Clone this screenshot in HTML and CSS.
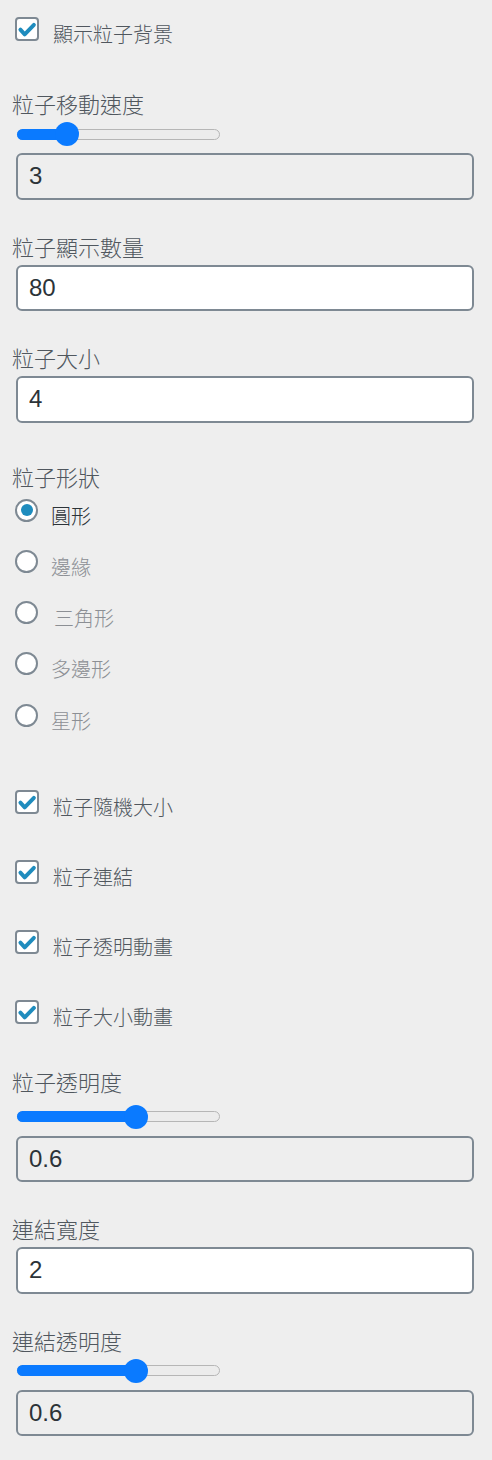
FILE: index.html
```html
<!DOCTYPE html>
<html lang="zh-Hant">
<head>
<meta charset="utf-8">
<title>粒子設定</title>
<link rel="stylesheet" href="styles.css">
</head>
<body>
<div class="panel">
  <label class="check check-top">
    <span class="box"><svg viewBox="0 0 20 20"><path d="M3.4 10.6 L7.7 15.4 L16.9 5.9"/></svg></span>
    <span class="check-text">顯示粒子背景</span>
  </label>

  <div class="field field-first">
    <div class="field-label">粒子移動速度</div>
    <div class="slider" style="--v:0.21">
      <div class="track"></div>
      <div class="fill"></div>
      <div class="thumb"></div>
    </div>
    <input class="text-input readonly" type="text" value="3" readonly>
  </div>

  <div class="field">
    <div class="field-label">粒子顯示數量</div>
    <input class="text-input" type="text" value="80">
  </div>

  <div class="field">
    <div class="field-label">粒子大小</div>
    <input class="text-input" type="text" value="4">
  </div>

  <div class="field field-radios">
    <div class="field-label">粒子形狀</div>
    <div class="radios">
      <label class="radio checked"><span class="circle"></span><span class="radio-text">圓形</span></label>
      <label class="radio"><span class="circle"></span><span class="radio-text">邊緣</span></label>
      <label class="radio"><span class="circle"></span><span class="radio-text shifted">三角形</span></label>
      <label class="radio"><span class="circle"></span><span class="radio-text">多邊形</span></label>
      <label class="radio"><span class="circle"></span><span class="radio-text">星形</span></label>
    </div>
  </div>

  <div class="checks">
    <label class="check">
      <span class="box"><svg viewBox="0 0 20 20"><path d="M3.4 10.6 L7.7 15.4 L16.9 5.9"/></svg></span>
      <span class="check-text">粒子隨機大小</span>
    </label>
    <label class="check">
      <span class="box"><svg viewBox="0 0 20 20"><path d="M3.4 10.6 L7.7 15.4 L16.9 5.9"/></svg></span>
      <span class="check-text">粒子連結</span>
    </label>
    <label class="check">
      <span class="box"><svg viewBox="0 0 20 20"><path d="M3.4 10.6 L7.7 15.4 L16.9 5.9"/></svg></span>
      <span class="check-text">粒子透明動畫</span>
    </label>
    <label class="check">
      <span class="box"><svg viewBox="0 0 20 20"><path d="M3.4 10.6 L7.7 15.4 L16.9 5.9"/></svg></span>
      <span class="check-text">粒子大小動畫</span>
    </label>
  </div>

  <div class="field field-after-checks">
    <div class="field-label">粒子透明度</div>
    <div class="slider" style="--v:0.6">
      <div class="track"></div>
      <div class="fill"></div>
      <div class="thumb"></div>
    </div>
    <input class="text-input readonly" type="text" value="0.6" readonly>
  </div>

  <div class="field">
    <div class="field-label">連結寬度</div>
    <input class="text-input" type="text" value="2">
  </div>

  <div class="field">
    <div class="field-label">連結透明度</div>
    <div class="slider" style="--v:0.6">
      <div class="track"></div>
      <div class="fill"></div>
      <div class="thumb"></div>
    </div>
    <input class="text-input readonly" type="text" value="0.6" readonly>
  </div>
</div>
</body>
</html>
```

FILE: styles.css
```css
html, body {
  margin: 0;
  padding: 0;
  background: #eeeeee;
}

body {
  font-family: "Noto Sans CJK TC", "Noto Sans", sans-serif;
  font-weight: 300;
  color: #50575e;
}

.panel {
  display: flex;
  flex-direction: column;
  padding: 17px 18px 20px 12px;
}

/* checkbox */
.check {
  display: flex;
  align-items: flex-start;
  margin-left: 3px;
}

.box {
  width: 24px;
  height: 24px;
  box-sizing: border-box;
  border: 2px solid #7e8993;
  border-radius: 4px;
  background: #ffffff;
  flex: none;
  display: flex;
}

.box svg {
  width: 20px;
  height: 20px;
}

.box path {
  fill: none;
  stroke: #1e8cbe;
  stroke-width: 3.9;
  stroke-linecap: round;
  stroke-linejoin: round;
}

.check-text {
  margin-top: 7px;
  margin-left: 14px;
  font-size: 20px;
  line-height: 20px;
  color: #50575e;
  white-space: nowrap;
}

/* fields */
.field {
  display: flex;
  flex-direction: column;
  margin-top: 35px;
}

.field-first {
  margin-top: 48px;
}

.field-radios {
  margin-top: 42.5px;
}

.field-after-checks {
  margin-top: 43.5px;
}

.field-label {
  font-size: 22px;
  line-height: 22px;
  color: #50575e;
  margin-bottom: 8px;
  white-space: nowrap;
}

.field-after-checks .field-label {
  margin-bottom: 12.5px;
}

.slider {
  position: relative;
  width: 203px;
  height: 24px;
  margin-left: 5px;
  margin-bottom: 7px;
}

.track {
  position: absolute;
  left: 0;
  right: 0;
  top: 6.5px;
  height: 11px;
  box-sizing: border-box;
  border: 1.5px solid #b6b6b6;
  border-radius: 6px;
  background: #ececec;
}

.fill {
  position: absolute;
  left: 0;
  top: 6.5px;
  height: 11px;
  border-radius: 6px;
  background: #0a7aff;
  width: calc(var(--v) * 179px + 12px);
}

.thumb {
  position: absolute;
  top: 0;
  left: calc(var(--v) * 179px);
  width: 24px;
  height: 24px;
  border-radius: 50%;
  background: #0a7aff;
}

.text-input {
  display: block;
  box-sizing: border-box;
  width: 458px;
  height: 46.5px;
  margin: 0 0 0 4px;
  padding: 0 0 0 11px;
  border: 2px solid #7e8993;
  border-radius: 6px;
  background: #ffffff;
  font-family: "Liberation Sans", Arial, sans-serif;
  font-weight: 400;
  font-size: 24px;
  color: #2c3338;
  outline: none;
  appearance: none;
}

.text-input.readonly {
  background: #eeeeee;
}

/* radios */
.radios {
  display: flex;
  flex-direction: column;
  gap: 24.25px;
  margin-top: 3.5px;
}

.radio {
  display: flex;
  align-items: flex-start;
  margin-left: 3px;
}

.circle {
  width: 23px;
  height: 23px;
  box-sizing: border-box;
  border: 2px solid #7e8993;
  border-radius: 50%;
  background: #ffffff;
  flex: none;
  display: flex;
  align-items: center;
  justify-content: center;
}

.radio.checked .circle::after {
  content: "";
  width: 12px;
  height: 12px;
  border-radius: 50%;
  background: #1e8cbe;
}

.radio-text {
  margin-top: 7px;
  margin-left: 13px;
  font-size: 20px;
  line-height: 20px;
  color: #8c8f94;
  white-space: nowrap;
}

.radio.checked .radio-text {
  color: #2c3338;
}

.radio-text.shifted {
  margin-left: 16px;
}

/* checkbox list */
.checks {
  display: flex;
  flex-direction: column;
  gap: 43px;
  margin-top: 59px;
}
```
